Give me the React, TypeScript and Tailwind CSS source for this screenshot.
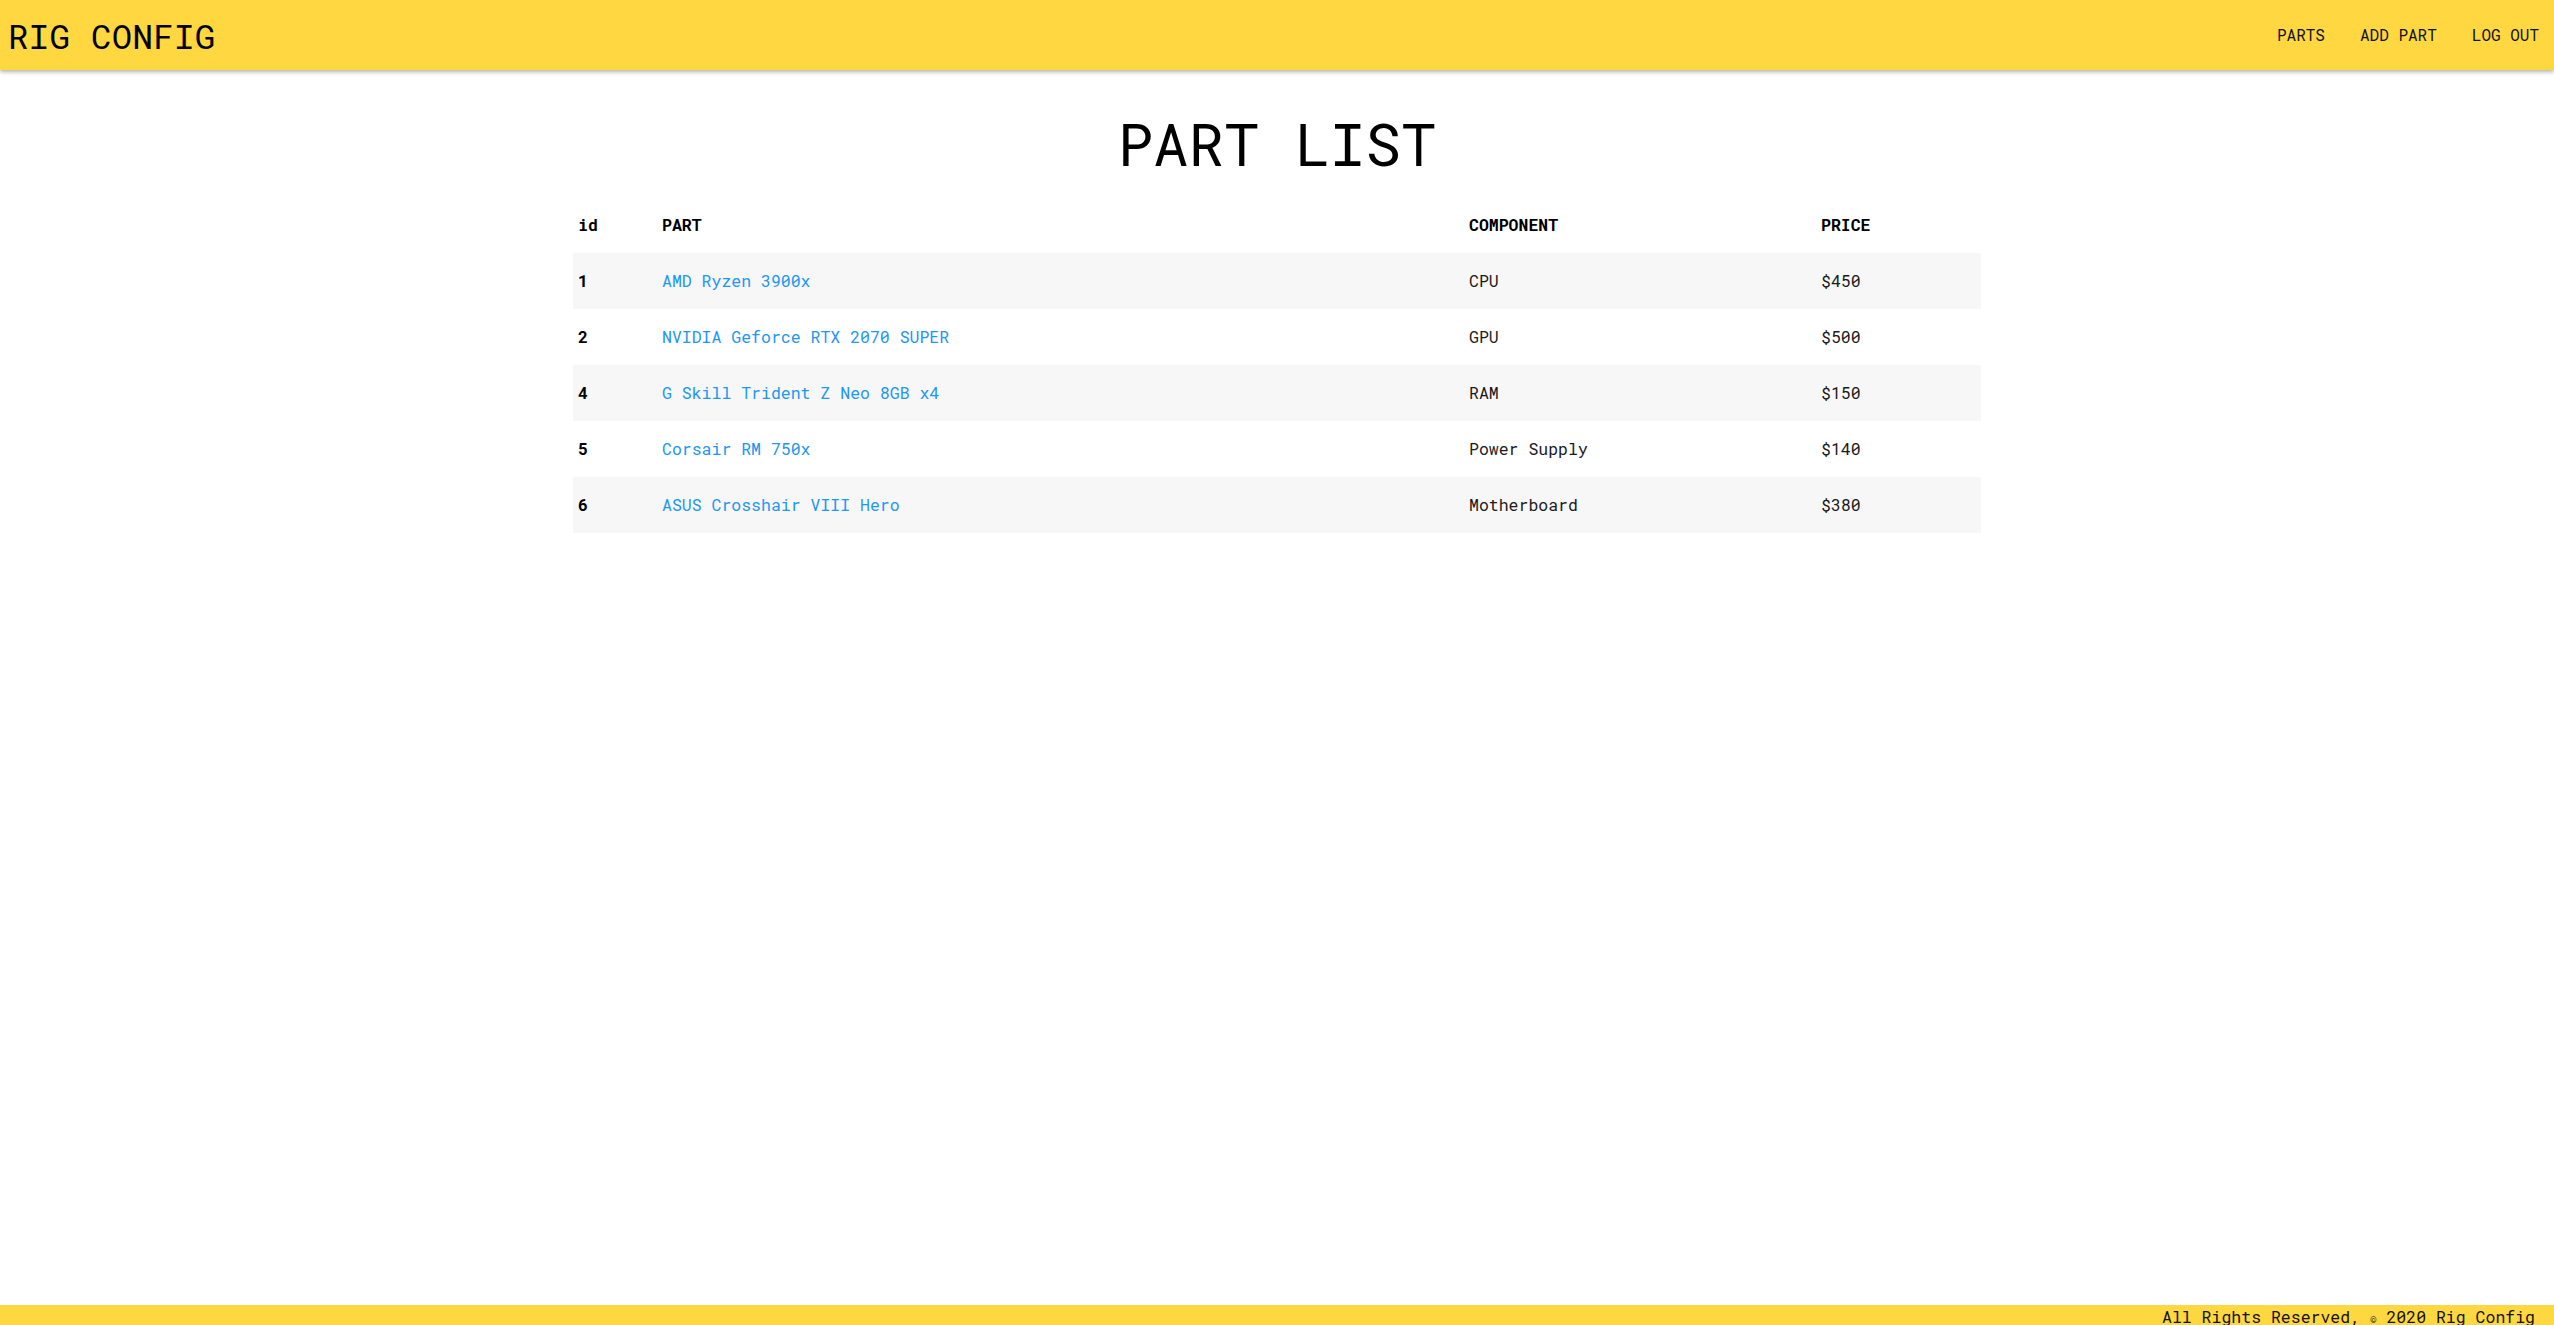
const parts = [
  { id: 1, name: "AMD Ryzen 3900x", component: "CPU", price: 450 },
  { id: 2, name: "NVIDIA Geforce RTX 2070 SUPER", component: "GPU", price: 500 },
  { id: 4, name: "G Skill Trident Z Neo 8GB x4", component: "RAM", price: 150 },
  { id: 5, name: "Corsair RM 750x", component: "Power Supply", price: 140 },
  { id: 6, name: "ASUS Crosshair VIII Hero", component: "Motherboard", price: 380 },
];

const cols = "grid grid-cols-[84px_807px_352px_1fr]";

function NavBar() {
  return (
    <header className="relative z-10 flex h-[70px] shrink-0 items-center justify-between bg-[#ffd740] pl-[8px] pr-[15px] shadow-[0_2px_4px_rgba(0,0,0,0.3)]">
      <a className="text-[34px] tracking-[0.01em] text-black">RIG CONFIG</a>
      <nav className="flex items-center gap-[35px] text-[16px] text-[#111]">
        <a>PARTS</a>
        <a>ADD PART</a>
        <a>LOG OUT</a>
      </nav>
    </header>
  );
}

function PartTable() {
  return (
    <div className="mx-auto mt-[20px] w-[1408px] text-[16.5px]">
      <div className={`${cols} h-[56px] items-center px-[5px] font-bold text-black`}>
        <div>id</div>
        <div>PART</div>
        <div>COMPONENT</div>
        <div>PRICE</div>
      </div>
      {parts.map((p, i) => (
        <div
          key={p.id}
          className={`${cols} h-[56px] items-center px-[5px] ${i % 2 === 0 ? "bg-[#f7f7f7]" : "bg-white"}`}
        >
          <div className="font-bold text-black">{p.id}</div>
          <div>
            <a className="cursor-pointer text-[#2196f3]">{p.name}</a>
          </div>
          <div className="text-[#1a1a1a]">{p.component}</div>
          <div className="text-[#1a1a1a]">${p.price}</div>
        </div>
      ))}
    </div>
  );
}

export default function App() {
  return (
    <div className="flex h-screen flex-col overflow-hidden bg-white font-['Roboto_Mono','DejaVu_Sans_Mono',monospace] text-black">
      <NavBar />
      <main className="h-[1235px] shrink-0 pt-[40px]">
        <h1 className="h-[67px] text-center text-[59px] leading-[67px] font-normal">PART LIST</h1>
        <PartTable />
      </main>
      <footer className="shrink-0 bg-[#ffd740] pr-[19px] text-right text-[16.5px] leading-6 text-[#111]">
        All Rights Reserved, <span className="text-[11px]">©</span> 2020 Rig Config
      </footer>
    </div>
  );
}
